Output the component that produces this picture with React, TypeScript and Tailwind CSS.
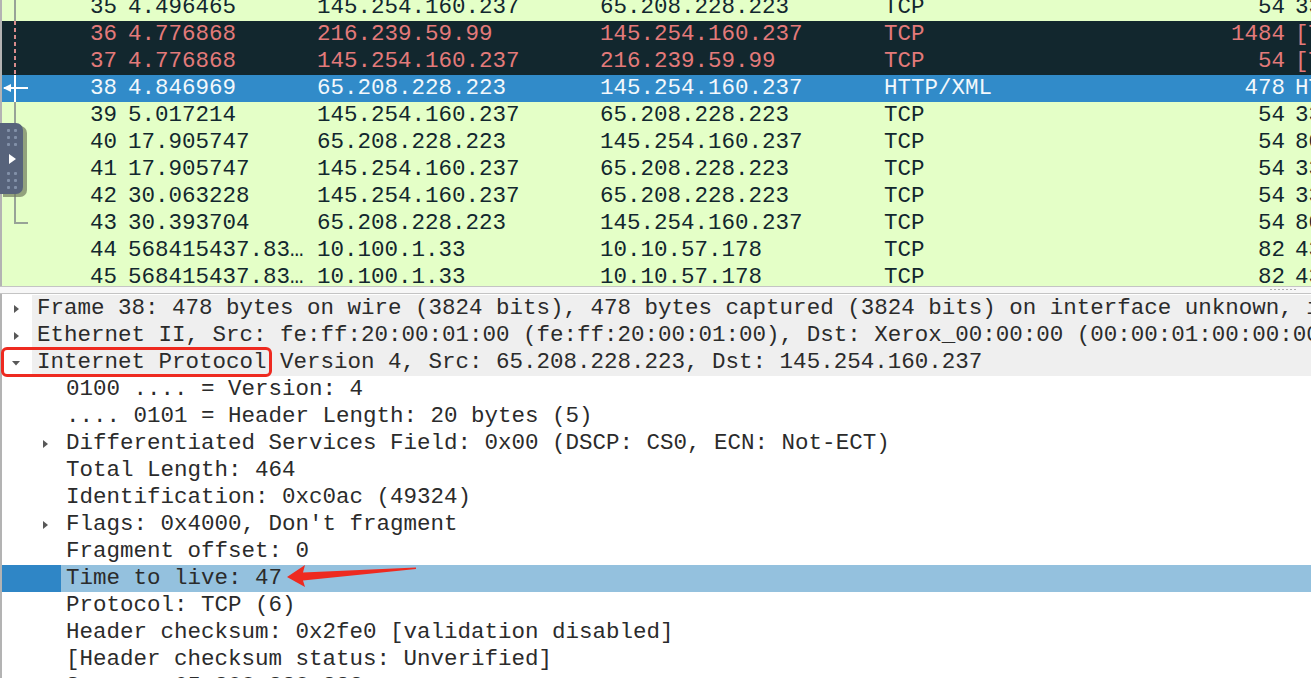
import React from 'react';

type Pkt = {
  no: number;
  time: string;
  src: string;
  dst: string;
  proto: string;
  len: string;
  info: string;
  kind: 'ok' | 'bad' | 'sel';
};

const PACKETS: Pkt[] = [
  { no: 35, time: '4.496465', src: '145.254.160.237', dst: '65.208.228.223', proto: 'TCP', len: '54', info: '3372 → 80 [ACK]', kind: 'ok' },
  { no: 36, time: '4.776868', src: '216.239.59.99', dst: '145.254.160.237', proto: 'TCP', len: '1484', info: '[TCP Previous segment not captured]', kind: 'bad' },
  { no: 37, time: '4.776868', src: '145.254.160.237', dst: '216.239.59.99', proto: 'TCP', len: '54', info: '[TCP Dup ACK]', kind: 'bad' },
  { no: 38, time: '4.846969', src: '65.208.228.223', dst: '145.254.160.237', proto: 'HTTP/XML', len: '478', info: 'HTTP/1.1 200 OK', kind: 'sel' },
  { no: 39, time: '5.017214', src: '145.254.160.237', dst: '65.208.228.223', proto: 'TCP', len: '54', info: '3372 → 80 [ACK]', kind: 'ok' },
  { no: 40, time: '17.905747', src: '65.208.228.223', dst: '145.254.160.237', proto: 'TCP', len: '54', info: '80 → 3372 [FIN, ACK]', kind: 'ok' },
  { no: 41, time: '17.905747', src: '145.254.160.237', dst: '65.208.228.223', proto: 'TCP', len: '54', info: '3372 → 80 [ACK]', kind: 'ok' },
  { no: 42, time: '30.063228', src: '145.254.160.237', dst: '65.208.228.223', proto: 'TCP', len: '54', info: '3372 → 80 [FIN, ACK]', kind: 'ok' },
  { no: 43, time: '30.393704', src: '65.208.228.223', dst: '145.254.160.237', proto: 'TCP', len: '54', info: '80 → 3372 [ACK]', kind: 'ok' },
  { no: 44, time: '568415437.83…', src: '10.100.1.33', dst: '10.10.57.178', proto: 'TCP', len: '82', info: '43 → 445', kind: 'ok' },
  { no: 45, time: '568415437.83…', src: '10.100.1.33', dst: '10.10.57.178', proto: 'TCP', len: '82', info: '43 → 445', kind: 'ok' },
];

type Node = { text: string; level: number; arrow?: 'right' | 'down'; head?: boolean; sel?: boolean };

const DETAILS: Node[] = [
  { text: 'Frame 38: 478 bytes on wire (3824 bits), 478 bytes captured (3824 bits) on interface unknown, id 0', level: 0, arrow: 'right', head: true },
  { text: 'Ethernet II, Src: fe:ff:20:00:01:00 (fe:ff:20:00:01:00), Dst: Xerox_00:00:00 (00:00:01:00:00:00)', level: 0, arrow: 'right', head: true },
  { text: 'Internet Protocol Version 4, Src: 65.208.228.223, Dst: 145.254.160.237', level: 0, arrow: 'down', head: true },
  { text: '0100 .... = Version: 4', level: 1 },
  { text: '.... 0101 = Header Length: 20 bytes (5)', level: 1 },
  { text: 'Differentiated Services Field: 0x00 (DSCP: CS0, ECN: Not-ECT)', level: 1, arrow: 'right' },
  { text: 'Total Length: 464', level: 1 },
  { text: 'Identification: 0xc0ac (49324)', level: 1 },
  { text: "Flags: 0x4000, Don't fragment", level: 1, arrow: 'right' },
  { text: 'Fragment offset: 0', level: 1 },
  { text: 'Time to live: 47', level: 1, sel: true },
  { text: 'Protocol: TCP (6)', level: 1 },
  { text: 'Header checksum: 0x2fe0 [validation disabled]', level: 1 },
  { text: '[Header checksum status: Unverified]', level: 1 },
  { text: 'Source: 65.208.228.223', level: 1 },
];

const rowTone = {
  ok: 'bg-[#e4ffc7] text-[#12272e]',
  bad: 'bg-[#12272e] text-[#e37a7a]',
  sel: 'bg-[#318bc9] text-[#f2f8fc]',
};

const Tri: React.FC<{ dir: 'right' | 'down' }> = ({ dir }) => (
  <svg width="10" height="10" viewBox="0 0 10 10" className="shrink-0">
    {dir === 'right' ? (
      <polygon points="3,1 8,5 3,9" fill="#585858" />
    ) : (
      <polygon points="1,3 9,3 5,7.5" fill="#585858" />
    )}
  </svg>
);

const PacketRow: React.FC<{ p: Pkt }> = ({ p }) => (
  <div className={`flex h-[27px] items-center overflow-hidden whitespace-nowrap ${rowTone[p.kind]}`}>
    <span className="w-[115px] shrink-0 text-right">{p.no}</span>
    <span className="w-[200px] shrink-0 pl-[11px]">{p.time}</span>
    <span className="w-[283px] shrink-0">{p.src}</span>
    <span className="w-[284px] shrink-0">{p.dst}</span>
    <span className="w-[300px] shrink-0">{p.proto}</span>
    <span className="w-[101px] shrink-0 text-right">{p.len}</span>
    <span className="shrink-0 pl-[10px]">{p.info}</span>
  </div>
);

const DetailRow: React.FC<{ n: Node }> = ({ n }) => {
  const left = n.level === 0 ? 'w-[30px]' : 'w-[59px]';
  const pad = n.level === 0 ? 'pl-[9px]' : 'pl-[38px]';
  const leftBg = n.sel ? 'bg-[#2f86c6]' : 'bg-white';
  const rightBg = n.sel ? 'bg-[#94c1de]' : n.head ? 'bg-[#efefef]' : 'bg-white';
  return (
    <div className="flex h-[27px] overflow-hidden whitespace-nowrap">
      <div className={`${left} ${pad} ${leftBg} flex shrink-0 items-center`}>
        {n.arrow && <Tri dir={n.arrow} />}
      </div>
      <div className={`${rightBg} flex flex-1 items-center pl-[5px] text-[#2b2b2b]`}>{n.text}</div>
    </div>
  );
};

const Dots: React.FC = () => (
  <div className="grid grid-cols-2 gap-x-[4px] gap-y-[4px]">
    {[0, 1, 2, 3, 4, 5].map(i => (
      <span key={i} className="h-[3px] w-[3px] rounded-[1px] bg-[#8290a8]" />
    ))}
  </div>
);

export default function App() {
  return (
    <div className="relative h-[678px] w-[1311px] overflow-hidden bg-white font-['Liberation_Mono',monospace] text-[22.5px] leading-none">
      {/* packet list */}
      <div className="h-[286px] overflow-hidden border-l-2 border-[#b3b3b3] bg-[#e4ffc7]">
        <div className="-mt-[6px]">
          {PACKETS.map(p => (
            <PacketRow key={p.no} p={p} />
          ))}
        </div>
      </div>

      {/* splitter */}
      <div className="relative h-[8px] border-y border-[#c4c4c4] bg-[#f7f7f7]">
        <div className="absolute left-[1270px] top-[2px] flex gap-[2px]">
          {[0, 1, 2, 3, 4, 5, 6].map(i => (
            <span key={i} className="h-[1px] w-[2px] bg-[#b0b0b0]" />
          ))}
        </div>
      </div>

      {/* details */}
      <div className="h-[384px] overflow-hidden border-l-2 border-[#b3b3b3] pt-[1px]">
        {DETAILS.map((n, i) => (
          <DetailRow key={i} n={n} />
        ))}
      </div>

      {/* related packet indicator */}
      <div className="pointer-events-none absolute left-[14px] top-0 h-[21px] w-[2px] bg-[#97a397]" />
      <div className="pointer-events-none absolute left-[14px] top-[21px] h-[54px] w-[2px] bg-[repeating-linear-gradient(to_bottom,#d88c8c_0_4px,transparent_4px_7px)]" />
      <div className="pointer-events-none absolute left-[14px] top-[75px] h-[27px] w-[2px] bg-white" />
      <div className="pointer-events-none absolute left-[4px] top-[87px] h-[2px] w-[24px] bg-white" />
      <svg className="pointer-events-none absolute left-[2px] top-[83px]" width="10" height="10" viewBox="0 0 10 10">
        <polygon points="1,5 9,1 9,9" fill="#ffffff" />
      </svg>
      <div className="pointer-events-none absolute left-[14px] top-[102px] h-[122px] w-[2px] bg-[#97a397]" />
      <div className="pointer-events-none absolute left-[14px] top-[222px] h-[2px] w-[14px] bg-[#97a397]" />

      {/* floating side tab */}
      <div className="absolute left-[3px] top-[126px] h-[71px] w-[24px] rounded-r-[7px] bg-[#6f7b5e]/70" />
      <div className="absolute left-0 top-[123px] flex h-[71px] w-[23px] flex-col items-center justify-center gap-[7px] rounded-r-[7px] bg-[#57637b]">
        <Dots />
        <svg width="10" height="12" viewBox="0 0 10 12">
          <polygon points="2,1 9,6 2,11" fill="#ffffff" />
        </svg>
        <Dots />
      </div>

      {/* red annotation box */}
      <div className="absolute left-[1px] top-[347px] h-[30px] w-[271px] rounded-[6px] border-[3px] border-[#ee2a20]" />

      {/* red annotation arrow */}
      <svg className="absolute left-[280px] top-[560px]" width="140" height="30" viewBox="0 0 140 30">
        <polygon points="7,17 25,5 23,12.5 136,7.5 136,9 23,20.5 25,27" fill="#ee2a20" />
      </svg>
    </div>
  );
}
